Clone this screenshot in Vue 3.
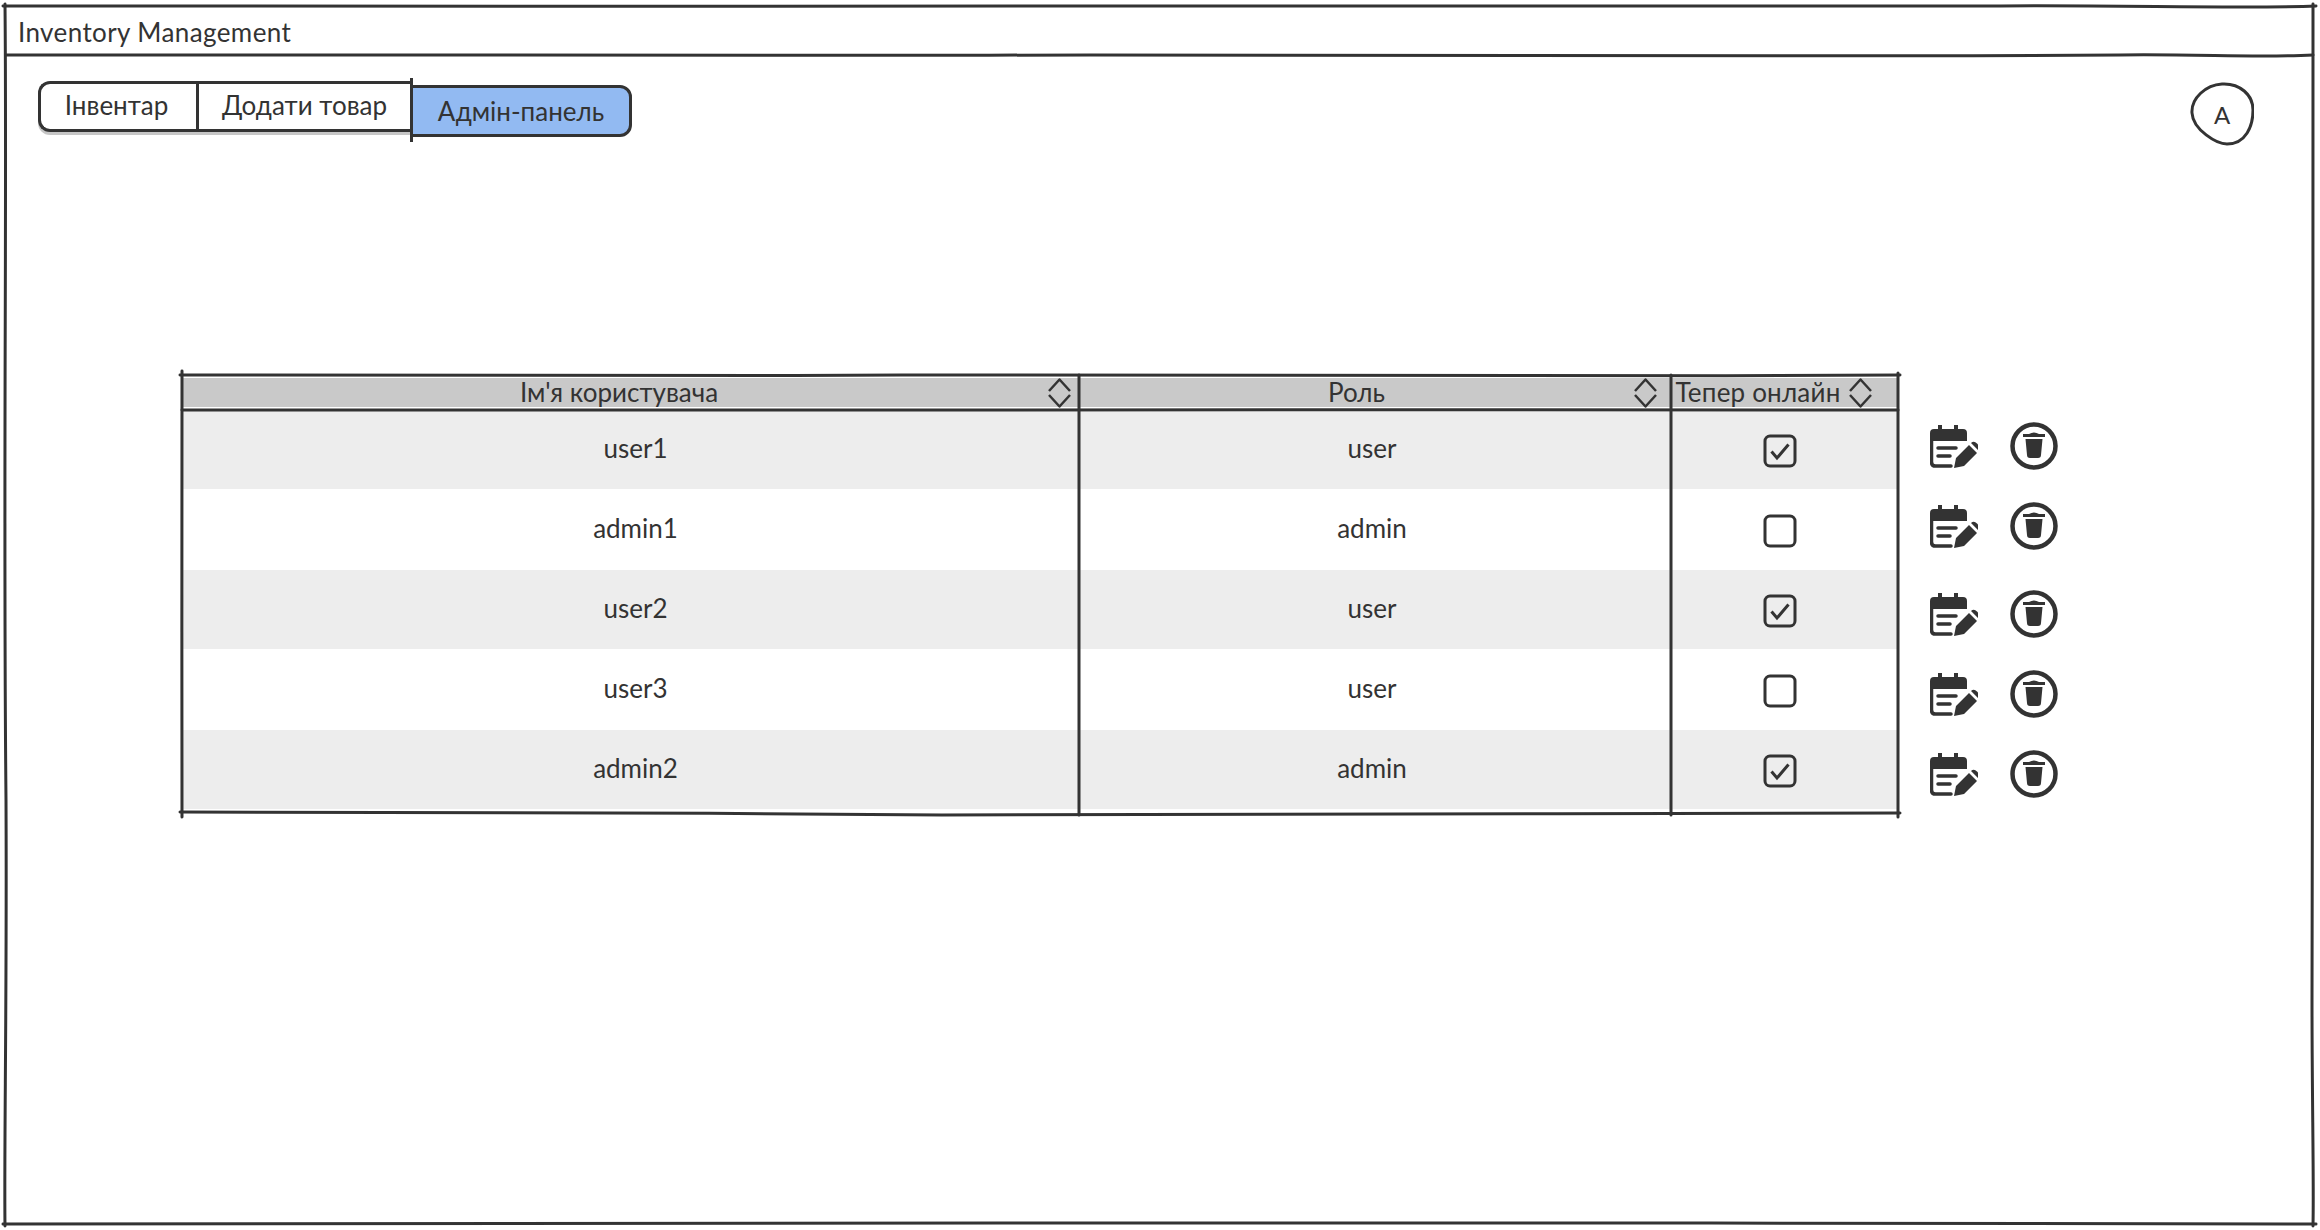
<script setup>
const tabs = [
  { label: 'Інвентар', cls: 'tab-first' },
  { label: 'Додати товар', cls: 'tab-second' },
  { label: 'Адмін-панель', cls: 'tab-active' }
]

const columns = [
  { label: "Ім'я користувача", cls: 'head-name' },
  { label: 'Роль', cls: 'head-role' },
  { label: 'Тепер онлайн', cls: 'head-online' }
]

const users = [
  { name: 'user1', role: 'user', online: true },
  { name: 'admin1', role: 'admin', online: false },
  { name: 'user2', role: 'user', online: true },
  { name: 'user3', role: 'user', online: false },
  { name: 'admin2', role: 'admin', online: true }
]
</script>

<template>
  <div class="page">
    <!-- hand drawn window frame -->
    <svg class="frame" width="2320" height="1230" viewBox="0 0 2320 1230" fill="none">
      <path d="M3 6 C300 5 700 7 1040 6 C1400 4 1700 9 2000 6 C2120 5 2250 9 2316 6" />
      <path d="M6 55 C300 53 700 56 1090 55 C1500 53 1800 58 2120 55 C2200 54 2260 58 2313 55" />
      <path d="M5 4 C7 200 3 500 6 800 C7 1000 4 1150 5 1226" />
      <path d="M2313 4 C2311 300 2315 700 2312 1000 C2312 1100 2314 1180 2313 1226" />
      <path d="M3 1224 C300 1222 600 1226 1000 1223 C1400 1225 1900 1221 2316 1224" />
    </svg>

    <header class="title-bar">Inventory Management</header>

    <div class="toolbar">
      <nav class="tabs">
        <div v-for="tab in tabs" :key="tab.label" class="tab" :class="tab.cls">{{ tab.label }}</div>
      </nav>
      <div class="avatar">
        <svg class="avatar-line" width="64" height="64" viewBox="0 0 64 64" fill="none">
          <path d="M32 2 C50 1 63 13 63 28 C63 44 56 62 37 62 C27 62 3 48 2 31 C1 16 16 3 32 2 Z" />
        </svg>
        A
      </div>
    </div>

    <section class="content">
      <div class="table">
        <div class="row head">
          <div v-for="col in columns" :key="col.label" class="head-cell" :class="col.cls">
            <span class="head-label">{{ col.label }}</span>
            <svg class="sort" width="23" height="30" viewBox="0 0 23 30" fill="none">
              <path d="M1 13 L11.5 1.5 L22 13" />
              <path d="M1 17 L11.5 28.5 L22 17" />
            </svg>
          </div>
        </div>

        <div v-for="user in users" :key="user.name" class="row body">
          <div class="cell cell-name">{{ user.name }}</div>
          <div class="cell cell-role">{{ user.role }}</div>
          <div class="cell check-cell">
            <svg width="34" height="34" viewBox="0 0 34 34" fill="none" class="checkbox">
              <rect x="2" y="2" width="30" height="30" rx="5" />
              <path v-if="user.online" d="M8.5 17.5 L14 24 L25.5 10.5" class="tick" />
            </svg>
          </div>
        </div>

        <!-- table outline and column rules drawn over the cells -->
        <svg class="table-lines" width="1716" height="450" viewBox="0 0 1716 450" fill="none">
          <path d="M-2 0 C300 -1 500 2 720 0 C1100 -1 1400 2 1718 0" />
          <path d="M0 35 C300 33 500 37 790 35 C1100 33 1400 37 1716 35" />
          <path d="M0 -4 C1 120 -1 300 0 442" />
          <path d="M897 0 C898 150 896 300 897 440" />
          <path d="M1489 0 C1490 150 1488 300 1489 440" />
          <path d="M1716 -2 C1715 150 1717 300 1716 442" />
          <path d="M-2 437 C200 436 500 438 760 440 C1000 437 1400 440 1718 438" />
        </svg>
      </div>

      <div class="actions">
        <div v-for="user in users" :key="user.name" class="action-row">
          <svg width="48" height="43" viewBox="0 0 48 43">
            <path class="solid" d="M4 4 H8 V0 H12 V4 H24 V0 H28 V4 H33 Q37 4 37 8 V16 H0 V8 Q0 4 4 4 Z" />
            <path class="outline" d="M1.5 16 V37 Q1.5 41 5.5 41 H21" />
            <path class="outline" d="M8 23 H26 M8 31 H20" />
            <path class="solid" d="M24 43 L26 33 L39 20 L47 28 L34 41 Z M41 18 Q44 15.500 47 18.500 Q50 21.500 48.500 25.500 Z" />
          </svg>
          <svg width="48" height="48" viewBox="0 0 48 48">
            <circle class="outline ring" cx="24" cy="24" r="21.500" />
            <path class="solid" d="M19 12 Q24 9 29 12 H35 V15 H13 V12 Z M15.500 17 H32.500 L31 33 Q31 36 28 36 H20 Q17 36 17 33 Z" />
          </svg>
        </div>
      </div>
    </section>
  </div>
</template>

<style>
html,
body {
  margin: 0;
  background: #fff;
}
</style>

<style scoped>
.page {
  position: relative;
  width: 2320px;
  height: 1230px;
  overflow: hidden;
  background: #fff;
  color: #333;
  font-family: Lato, "Noto Sans", sans-serif;
  font-size: 26px;
}
.frame {
  position: absolute;
  left: 0;
  top: 0;
  pointer-events: none;
}
.frame path,
.table-lines path {
  stroke: #333;
  stroke-width: 3;
  stroke-linecap: round;
}

.title-bar {
  height: 49px;
  padding: 6px 0 0 18px;
  line-height: 52px;
  letter-spacing: 0.4px;
}

.toolbar {
  display: flex;
  justify-content: space-between;
  align-items: flex-start;
  padding: 26px 66px 0 38px;
}
.tabs {
  display: flex;
  align-items: flex-start;
}
.tab {
  box-sizing: border-box;
  height: 51px;
  line-height: 43px;
  text-align: center;
  border: 3px solid #333;
  background: #fff;
}
.tab-first {
  width: 158px;
  padding-right: 4px;
  border-right: none;
  border-radius: 12px 0 0 12px;
  box-shadow: 0 3px 0 #c6c6c6;
}
.tab-second {
  width: 214px;
  border-right: none;
  box-shadow: 0 3px 0 #c6c6c6;
}
.tab-active {
  position: relative;
  width: 222px;
  height: 52px;
  margin-top: 4px;
  line-height: 46px;
  background: #92baf2;
  border-radius: 0 12px 12px 0;
}
.tab-active::before {
  content: "";
  position: absolute;
  left: -3px;
  top: -10px;
  bottom: -8px;
  width: 3px;
  background: #333;
}

.avatar {
  position: relative;
  width: 64px;
  height: 64px;
  margin-top: 1px;
  display: flex;
  align-items: center;
  justify-content: center;
  font-size: 24px;
}
.avatar-line {
  position: absolute;
  left: 0;
  top: 0;
}
.avatar-line path {
  stroke: #333;
  stroke-width: 3;
}

.content {
  display: flex;
  align-items: flex-start;
  margin-top: 229px;
  padding-left: 182px;
}
.table {
  position: relative;
  width: 1716px;
  padding-bottom: 3px;
}
.table-lines {
  position: absolute;
  left: 0;
  top: 0;
  overflow: visible;
  pointer-events: none;
}
.row {
  display: grid;
  grid-template-columns: 897px 592px 227px;
}
.head {
  height: 35px;
  padding-top: 3px;
  box-sizing: border-box;
}
.head-cell {
  display: flex;
  align-items: center;
  height: 29px;
  background: #c9c9c9;
}
.head-label {
  flex: 1;
  text-align: center;
  line-height: 29px;
}
.head-name {
  padding: 0 8px 0 8px;
}
.head-role {
  padding: 0 14px 0 0;
}
.head-online {
  padding: 0 26px 0 3px;
}
.head-online .head-label {
  white-space: nowrap;
  padding-right: 7px;
  letter-spacing: 0.2px;
}
.sort path {
  stroke: #333;
  stroke-width: 2.500;
  stroke-linejoin: round;
}

.body {
  height: 81px;
}
.body:nth-child(even) {
  height: 79px;
  background: #ededed;
}
.cell {
  display: flex;
  align-items: center;
  justify-content: center;
  padding-bottom: 3px;
}
.cell-name {
  padding-left: 10px;
}
.cell-role {
  padding-right: 6px;
}
.check-cell {
  padding: 3px 10px 0 0;
}
.checkbox rect {
  stroke: #333;
  stroke-width: 3;
  fill: transparent;
}
.tick {
  stroke: #333;
  stroke-width: 3;
}

.actions {
  display: flex;
  flex-direction: column;
  gap: 32px;
  margin-left: 32px;
  padding-top: 47px;
}
.action-row {
  display: flex;
  align-items: center;
  gap: 32px;
}
.action-row:nth-child(3) {
  margin-top: 8px;
}
.solid {
  fill: #333;
}
.outline {
  fill: none;
  stroke: #333;
  stroke-width: 3.500;
  stroke-linecap: round;
}
.ring {
  stroke-width: 4.500;
}
</style>
